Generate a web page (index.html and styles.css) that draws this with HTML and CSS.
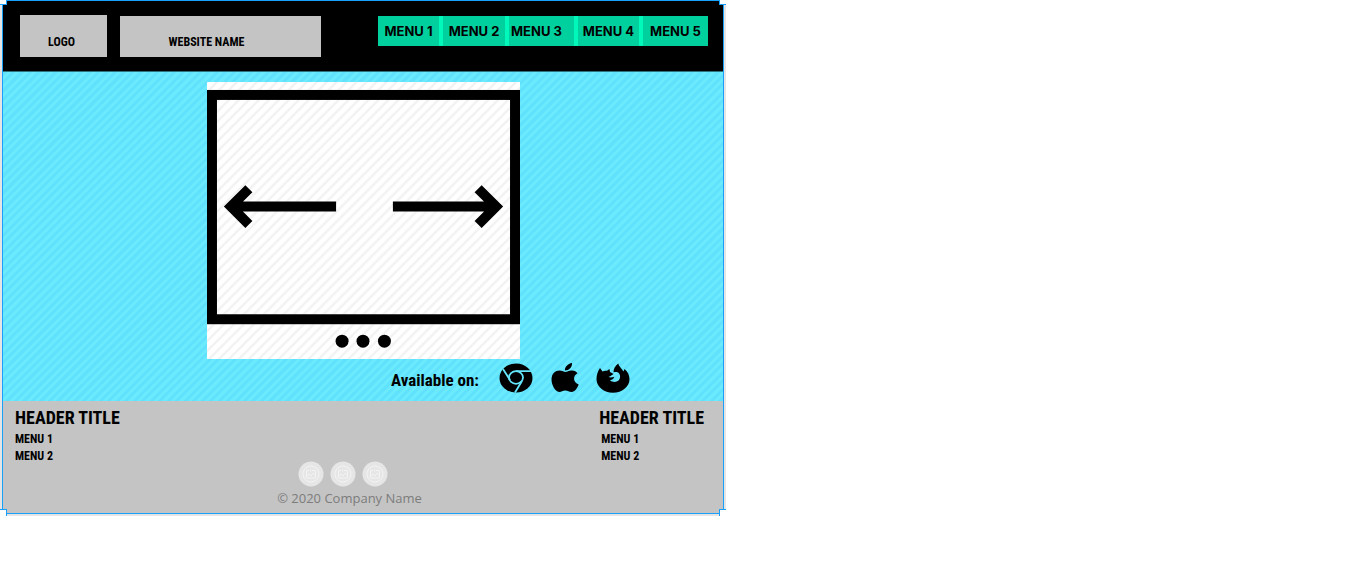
FILE: index.html
```html
<!DOCTYPE html>
<html lang="en">
<head>
<meta charset="utf-8">
<title>Website name</title>
<link rel="stylesheet" href="styles.css">
</head>
<body>
<div class="canvas">
  <div class="frame">
    <header class="header">
      <a class="logo" href="#">LOGO</a>
      <div class="site-name">WEBSITE NAME</div>
      <nav class="nav">
        <a class="nav-link" href="#">MENU 1</a>
        <a class="nav-link" href="#">MENU 2</a>
        <a class="nav-link nav-link-start" href="#">MENU 3</a>
        <a class="nav-link" href="#">MENU 4</a>
        <a class="nav-link" href="#">MENU 5</a>
      </nav>
    </header>
    <main class="hero">
      <svg class="slider" viewBox="0 0 314 278" role="img" aria-label="Image slider">
        <defs>
          <pattern id="hatch" width="10" height="10" patternUnits="userSpaceOnUse">
            <path d="M-2 2L2-2M0 10L10 0M8 12L12 8" stroke="#f2f2f2" stroke-width="2.400"/>
          </pattern>
        </defs>
        <rect width="314" height="278" fill="#fff"/>
        <rect width="314" height="278" fill="url(#hatch)"/>
        <rect x="5" y="13" width="304" height="225" fill="none" stroke="#000" stroke-width="10"/>
        <path d="M129.500 125H27M42 107L24 125L42 143M186.500 125H288M272 107L290 125L272 143" fill="none" stroke="#000" stroke-width="10"/>
        <circle cx="135.500" cy="260" r="6.500"/>
        <circle cx="156.500" cy="260" r="6.500"/>
        <circle cx="178" cy="260" r="6.500"/>
      </svg>
      <div class="available">
        <span class="available-label">Available on:</span>
        <svg class="icon icon-wide" viewBox="0 0 34 30" role="img" aria-label="Chrome">
          <ellipse cx="17" cy="15" rx="16.500" ry="14.500"/>
          <g fill="none" stroke="#64e6fd" stroke-width="1.800">
            <ellipse cx="17" cy="14.500" rx="7" ry="6.300"/>
            <path d="M17 8.200H32M4 6L11 17M23 18L16 29.500"/>
          </g>
        </svg>
        <svg class="icon icon-apple" viewBox="0 0 28 30" role="img" aria-label="Apple">
          <path d="M21 0C21.500 4 18 7.500 14 7.500C13.500 4 17 .5 21 0ZM14.500 9C16 9 18 7.300 21 7.500C23.500 7.700 25.500 8.700 26.500 10.300C21.500 13 22 19.500 27.700 21.500C26.500 24.500 24 29 20.500 29C18 29 17 27.600 14.300 27.600C11.500 27.600 10.500 29 8.300 29C3.500 28.500 .5 21 .5 16.500C.5 10.500 4.500 7.500 8.500 7.500C11 7.500 13 9 14.500 9Z"/>
        </svg>
        <svg class="icon icon-wide" viewBox="0 0 34 30" role="img" aria-label="Firefox">
          <path d="M4 5L6.500 8.500C8 7.600 9.500 7.500 11 7.800L13.500 6L14 9L17.500 11L14.500 13L12.500 14L15 14.500L18.500 13.700L17 16L14 17.500C17 19.500 20.500 19.300 22.500 17.500C25 15 24.500 10.500 21.500 9.300C20.300 8.800 19 8.800 17.500 9.300C17.500 6 19 3 22.200 .5C22.800 3.500 25.500 5 27.500 8.500L28.500 6C32 9 33.500 12.500 33.500 16C33.500 24 26 29.700 17 29.700C8 29.700.5 24 .5 16C.5 12 1.800 8 4 5Z"/>
        </svg>
      </div>
    </main>
    <footer class="footer">
      <div class="footer-columns">
        <section>
          <h2 class="footer-title">HEADER TITLE</h2>
          <a class="footer-link" href="#">MENU 1</a>
          <a class="footer-link" href="#">MENU 2</a>
        </section>
        <section>
          <h2 class="footer-title">HEADER TITLE</h2>
          <a class="footer-link footer-link-inset" href="#">MENU 1</a>
          <a class="footer-link footer-link-inset" href="#">MENU 2</a>
        </section>
      </div>
      <div class="footer-bottom">
        <svg width="0" height="0" class="sprite" aria-hidden="true">
          <symbol id="picture" viewBox="0 0 26 26">
            <circle cx="13" cy="13" r="12.500" fill="#e6e6e6"/>
            <g fill="none" stroke="#f3f3f3">
              <circle cx="13" cy="13" r="8"/>
              <path d="M11 9.500H8.500V17H17.500V9.500H14M8.500 15.500L11 13L13 15L15.500 12L17.500 14M12.500 8.500V10.500"/>
            </g>
          </symbol>
        </svg>
        <div class="social">
          <svg class="social-icon"><use href="#picture"/></svg>
          <svg class="social-icon"><use href="#picture"/></svg>
          <svg class="social-icon"><use href="#picture"/></svg>
        </div>
        <p class="copyright">© 2020 Company Name</p>
      </div>
    </footer>
    <span class="handle handle-tl"></span>
    <span class="handle handle-tr"></span>
    <span class="handle handle-bl"></span>
    <span class="handle handle-br"></span>
  </div>
</div>
</body>
</html>
```
FILE: styles.css
```css
* { box-sizing: border-box; }
body {
  margin: 0;
  background: #fff;
  color: #000;
  font-family: "Roboto Condensed", "Liberation Sans Narrow", Roboto, sans-serif;
  font-weight: 700;
}
a { color: inherit; text-decoration: none; }
.canvas {
  max-width: 726px;
  padding: 0 2px 2px;
  background: #e5e5e5;
}
.frame {
  position: relative;
  border: 1px solid #18a0fb;
}
.header {
  display: flex;
  align-items: flex-start;
  padding: 14px 15px 14px 17px;
  background: #000;
  border-bottom: 1px solid #2f7580;
}
.logo, .site-name {
  display: flex;
  justify-content: center;
  align-items: flex-end;
  height: 42px;
  padding-bottom: 8px;
  background: #c4c4c4;
  font-size: 12px;
  line-height: 14px;
}
.logo { flex: 0 1 87px; padding-right: 4px; }
.site-name {
  flex: 0 1 201px;
  height: 41px;
  margin: 1px 0 0 13px;
  padding-right: 28px;
}
.nav {
  display: grid;
  grid-template-columns: 61fr 62fr 65fr 61fr 65fr;
  gap: 4px;
  flex: 0 1 330px;
  margin: 1px 0 0 auto;
  background: #00f8bb;
}
.nav-link {
  background: #00d09e;
  font-family: Inter, sans-serif;
  font-size: 13px;
  font-weight: 700;
  line-height: 30px;
  text-align: center;
  white-space: nowrap;
}
.nav-link-start { padding-left: 2px; text-align: left; }
.hero {
  padding-top: 10px;
  background: repeating-linear-gradient(135deg, #60e2fd 0 3px, #6beafd 3px 6px);
}
.slider {
  display: block;
  width: 100%;
  max-width: 314px;
  margin: 0 auto;
  padding-left: 1px;
}
.available {
  display: flex;
  justify-content: flex-end;
  align-items: center;
  height: 42px;
  padding: 0 93px 4px 0;
}
.available-label {
  margin: 4px 20px 0 0;
  font-size: 17px;
  line-height: 20px;
}
.icon { height: 30px; }
.icon-wide { width: 34px; }
.icon-apple { width: 28px; margin: 0 17px 0 18px; }
.footer { padding: 6px 19px 6px 12px; background: #c4c4c4; }
.footer-columns { display: flex; justify-content: space-between; }
.footer-title { margin: 0 0 2px; font-size: 18px; line-height: 22px; }
.footer-link {
  display: block;
  font-size: 12px;
  line-height: 17px;
}
.footer-link-inset { padding-left: 2px; }
.footer-bottom {
  display: flex;
  flex-direction: column;
  align-items: center;
  padding-right: 20px;
}
.sprite { position: absolute; }
.social { display: flex; gap: 6px; margin-top: -4px; padding-right: 14px; }
.social-icon { width: 26px; height: 26px; }
.copyright {
  margin: 2px 0 0;
  color: #7c7c7c;
  font: 400 13px/18px "Open Sans", sans-serif;
}
.handle {
  position: absolute;
  width: 7px;
  height: 7px;
  background: #fff;
  border: 0 solid #18a0fb;
}
.handle-tl { top: -3px; left: -3px; border-width: 0 1px 1px 0; }
.handle-tr { top: -3px; right: -3px; border-width: 0 0 1px 1px; }
.handle-bl { bottom: -3px; left: -3px; border-width: 1px 1px 0 0; }
.handle-br { right: -3px; bottom: -3px; border-width: 1px 0 0 1px; }
```
